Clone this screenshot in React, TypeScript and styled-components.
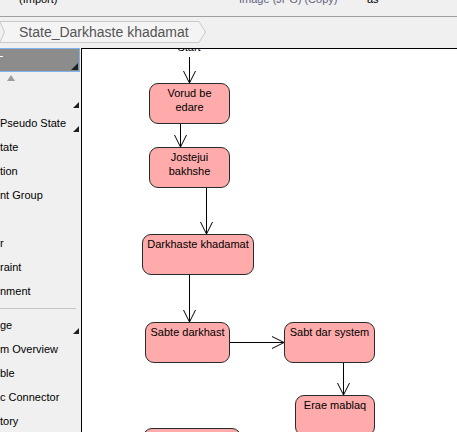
import styled, { createGlobalStyle } from "styled-components";

const GlobalStyle = createGlobalStyle`
    html, body {
        margin: 0;
        padding: 0;
        overflow: hidden;
        background: #f0f0f0;
    }
    * {
        box-sizing: border-box;
    }
`;

const Page = styled.div`
    width: 457px;
    height: 432px;
    display: flex;
    flex-direction: column;
    background: #f0f0f0;
    font-family: "Liberation Sans", Arial, sans-serif;
    overflow: hidden;
`;

const TopBar = styled.div`
    height: 17px;
    flex: none;
    display: flex;
    padding-left: 19px;
    border-bottom: 1px solid #a0a0a0;
    overflow: hidden;
    font-size: 11px;
    line-height: 13px;
`;

const TopCell = styled.span<{ $w?: number; $muted?: boolean }>`
    margin-top: -7px;
    width: ${(p) => (p.$w ? `${p.$w}px` : "auto")};
    flex: none;
    white-space: nowrap;
    color: ${(p) => (p.$muted ? "#60607e" : "#000")};
`;

const CrumbBar = styled.div`
    height: 31px;
    flex: none;
    padding-top: 4px;
`;

const Crumb = styled.div`
    position: relative;
    width: 206px;
    height: 22px;
    padding-left: 19px;
    display: flex;
    align-items: center;
    font-size: 14px;
    color: #555;
    white-space: nowrap;

    svg {
        position: absolute;
        left: 0;
        top: 0;
    }
    span {
        position: relative;
    }
`;

const Main = styled.div`
    flex: 1;
    display: flex;
    min-height: 0;
`;

const Palette = styled.div`
    width: 81px;
    flex: none;
    background: #f0f0f0;
    overflow: hidden;
    font-size: 11px;
    color: #000;
`;

const PaletteHeader = styled.div`
    position: relative;
    width: 80px;
    height: 24px;
    background: #8c8c8c;
    border: 1px solid #7eb4ea;
    border-left: none;
`;

const HeaderDash = styled.span`
    position: absolute;
    left: 0;
    top: 7px;
    width: 3px;
    height: 1px;
    background: #fff;
`;

const Corner = styled.span`
    position: absolute;
    right: 1px;
    bottom: 1px;
    width: 0;
    height: 0;
    border-left: 7px solid transparent;
    border-bottom: 7px solid #1e1e1e;
`;

const ScrollUp = styled.div`
    height: 15px;
    padding: 3px 0 0 7px;

    &::before {
        content: "";
        display: block;
        width: 0;
        height: 0;
        border-left: 4px solid transparent;
        border-right: 4px solid transparent;
        border-bottom: 6px solid #9c9c9c;
    }
`;

const Row = styled.div`
    position: relative;
    height: 24px;
    line-height: 24px;
    white-space: nowrap;
    overflow: hidden;
`;

const More = styled.span`
    position: absolute;
    right: 2px;
    top: 15px;
    width: 0;
    height: 0;
    border-left: 6px solid transparent;
    border-bottom: 6px solid #1e1e1e;
`;

const Separator = styled.div`
    height: 1px;
    margin: 5px 5px 4px 0;
    background: #c4c4c4;
`;

const Canvas = styled.div`
    position: relative;
    flex: 1;
    background: #fff;
    border-left: 1px solid #000;
    border-top: 1px solid #000;
    overflow: hidden;
    font-size: 11px;
    color: #000;

    svg {
        position: absolute;
        left: 0;
        top: 0;
    }
`;

const StartLabel = styled.span`
    position: absolute;
    left: 107px;
    top: -8px;
    transform: translateX(-50%);
    line-height: 13px;
`;

const Node = styled.div<{ $x: number; $y: number; $w: number }>`
    position: absolute;
    left: ${(p) => p.$x}px;
    top: ${(p) => p.$y}px;
    width: ${(p) => p.$w}px;
    height: 41px;
    padding-top: 2px;
    background: #ffabab;
    border: 1px solid #2a2a2a;
    border-radius: 9px;
    text-align: center;
    line-height: 14px;
    white-space: pre-line;
`;

const paletteTop = [
    { label: "", more: true },
    { label: "Pseudo State", more: true },
    { label: "tate" },
    { label: "tion" },
    { label: "nt Group" },
    { label: "" },
    { label: "r" },
    { label: "raint" },
    { label: "nment" },
];

const paletteBottom = [
    { label: "ge", more: true },
    { label: "m Overview" },
    { label: "ble" },
    { label: "c Connector" },
    { label: "tory" },
];

const nodes = [
    { x: 67, y: 34, w: 81, text: "Vorud be\nedare" },
    { x: 67, y: 98, w: 81, text: "Jostejui\nbakhshe" },
    { x: 60, y: 185, w: 112, text: "Darkhaste khadamat" },
    { x: 63, y: 273, w: 85, text: "Sabte darkhast" },
    { x: 202, y: 273, w: 91, text: "Sabt dar system" },
    { x: 213, y: 346, w: 80, text: "Erae mablaq" },
    { x: 61, y: 379, w: 98, text: "" },
];

// x, y1, y2 for downward arrows; horizontal arrow is separate
const downArrows = [
    [107, 8, 34],
    [98, 74, 98],
    [124, 138, 185],
    [107, 225, 273],
    [261, 313, 346],
];

function DownArrow({ x, y1, y2 }: { x: number; y1: number; y2: number }) {
    const cx = x + 0.5;
    return (
        <g>
            <line x1={cx} y1={y1} x2={cx} y2={y2} />
            <polyline points={`${cx - 6},${y2 - 12} ${cx},${y2} ${cx + 6},${y2 - 12}`} />
        </g>
    );
}

function RightArrow({ y, x1, x2 }: { y: number; x1: number; x2: number }) {
    const cy = y + 0.5;
    return (
        <g>
            <line x1={x1} y1={cy} x2={x2} y2={cy} />
            <polyline points={`${x2 - 12},${cy - 6} ${x2},${cy} ${x2 - 12},${cy + 6}`} />
        </g>
    );
}

export default function App() {
    return (
        <Page>
            <GlobalStyle />
            <TopBar>
                <TopCell $w={220}>(Import)</TopCell>
                <TopCell $w={128} $muted>
                    Image (JPG) (Copy)
                </TopCell>
                <TopCell>as</TopCell>
            </TopBar>
            <CrumbBar>
                <Crumb>
                    <svg width="206" height="22" viewBox="0 0 206 22">
                        <polygon
                            points="0,0.5 199,0.5 205.5,11 199,21.5 0,21.5 4.5,11"
                            fill="#f4f4f4"
                            stroke="#c9c9c9"
                            strokeWidth="1"
                        />
                    </svg>
                    <span>State_Darkhaste khadamat</span>
                </Crumb>
            </CrumbBar>
            <Main>
                <Palette>
                    <PaletteHeader>
                        <HeaderDash />
                        <Corner />
                    </PaletteHeader>
                    <ScrollUp />
                    {paletteTop.map((item, i) => (
                        <Row key={i}>
                            {item.label}
                            {item.more && <More />}
                        </Row>
                    ))}
                    <Separator />
                    {paletteBottom.map((item, i) => (
                        <Row key={i}>
                            {item.label}
                            {item.more && <More />}
                        </Row>
                    ))}
                </Palette>
                <Canvas>
                    <svg width="375" height="383" fill="none" stroke="#000" strokeWidth="1">
                        {downArrows.map(([x, y1, y2], i) => (
                            <DownArrow key={i} x={x} y1={y1} y2={y2} />
                        ))}
                        <RightArrow y={293} x1={148} x2={202} />
                    </svg>
                    <StartLabel>Start</StartLabel>
                    {nodes.map((n, i) => (
                        <Node key={i} $x={n.x} $y={n.y} $w={n.w}>
                            {n.text}
                        </Node>
                    ))}
                </Canvas>
            </Main>
        </Page>
    );
}
